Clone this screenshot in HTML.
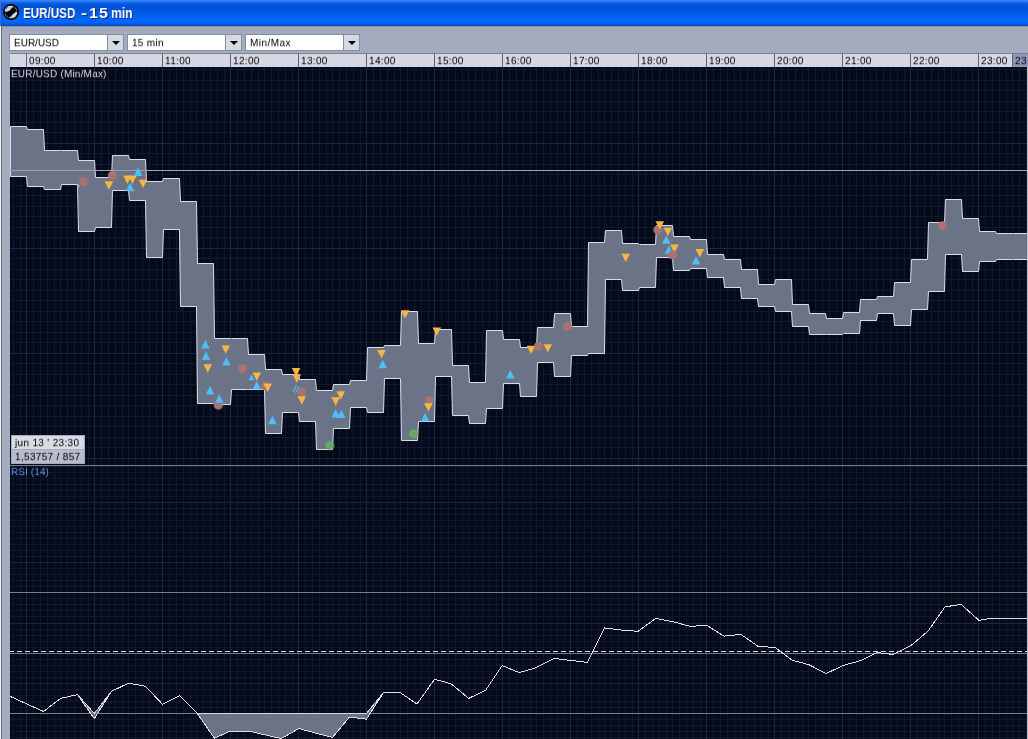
<!DOCTYPE html>
<html><head><meta charset="utf-8"><title>EUR/USD - 15 min</title>
<style>
html,body{margin:0;padding:0}
body{width:1028px;height:739px;overflow:hidden;position:relative;background:#A3ABBF;font-family:"Liberation Sans",sans-serif}
#title{position:absolute;left:0;top:0;width:1028px;height:26px;background:linear-gradient(#3D8EF8 0,#2C7EF4 1px,#1468EA 2.5px,#0456DE 4.5px,#0052D8 8px,#005AE6 13px,#0066FA 19px,#0066F8 22.5px,#0054DC 24.5px,#0044C4 26px)}
#title .lb{position:absolute;left:0;top:0;width:1px;height:26px;background:#5B5FC8}
#title .tx{position:absolute;left:23px;top:4px;font-weight:bold;font-size:14px;line-height:18px;color:#fff;text-shadow:1px 1px 0 #0A2A8C;white-space:nowrap;width:120px;height:18px}
#title .tx span{position:absolute;top:0;display:block;transform-origin:0 0;will-change:transform}
#ico{position:absolute;left:3px;top:4px}
#tline{position:absolute;left:1px;top:26px;width:1027px;height:1px;background:#8C8F98}
#lw{position:absolute;left:0;top:26px;width:1px;height:713px;background:#F4F4F6}
#ld{position:absolute;left:1px;top:26px;width:1px;height:713px;background:#6A6E78}
.cb{position:absolute;top:34px;height:15px;width:113px;border:1px solid #858DA0;background:#fff}
.cb span{transform:scaleY(0.93);transform-origin:0 100%;will-change:transform;position:absolute;left:3.6px;top:1px;font-size:10px;line-height:13px;letter-spacing:0.3px;color:#000;white-space:nowrap}
.cb i{position:absolute;right:0;top:0;width:15px;height:15px;background:#D5D9E3;border-left:1px solid #858DA0}
.cb i:after{content:"";position:absolute;left:4px;top:6px;border-left:4px solid transparent;border-right:4px solid transparent;border-top:4px solid #000}
#axis{position:absolute;left:10px;top:53px;width:1018px;height:14px;background:#D5D8E2;border-top:1px solid #7B8296;box-sizing:border-box}
.tk{position:absolute;top:53px;width:1px;height:14px;background:#5E6678}
.tl{will-change:transform;position:absolute;top:54.6px;font-size:10px;line-height:12px;letter-spacing:0.33px;transform:scaleY(0.93);transform-origin:0 100%;color:#000}
.cur span{display:inline-block;will-change:transform;transform:scaleY(0.93);transform-origin:0 100%;}
.cur{position:absolute;left:1012px;top:54px;width:16px;height:13px;background:#8D96BA;font-size:10px;line-height:13px;letter-spacing:0.33px;color:#000;padding-left:2px;box-sizing:border-box;overflow:hidden;border-left:1px solid #5E6678}
.lbl{transform:scaleY(0.93);transform-origin:0 100%;position:absolute;left:10.5px;font-size:10px;line-height:12px;letter-spacing:0.2px;white-space:nowrap;will-change:transform}
.tip span{display:inline-block;will-change:transform;transform:scaleY(0.93);transform-origin:0 100%;}
.tip{position:absolute;left:11px;width:72px;height:13px;border:1px solid #A4AABC;font-size:10px;line-height:13px;letter-spacing:0.33px;color:#000;white-space:nowrap}
</style></head><body>
<div id="title"><div class="lb"></div>
<svg id="ico" width="16" height="16" viewBox="0 0 16 16"><circle cx="8" cy="8" r="8" fill="#000"/><g transform="translate(8 8) scale(0.93) translate(-8 -8)"><path d="M1.3 7.7C1.1 4.2 3.6 1.3 7.4 1.2C9 1.2 10.3 1.6 11.3 2.3C9.6 2.7 8.9 3.7 8.1 4.9C7.1 6.4 5.6 7.5 3.6 7.7Z" fill="#CACED8"/><path d="M2.2 5.6C2.8 3.6 4.6 2.2 6.8 1.9C5.2 2.8 3.8 4.2 3.2 6.2Z" fill="#E6E8EE"/><path d="M11.6 2.9A6.6 6.6 0 0 1 14.6 7.2" stroke="#596171" stroke-width="1.5" fill="none"/><path d="M14.8 7.6C15 11.6 12 14.7 8.2 14.8C7.1 14.8 6.1 14.6 5.4 14.1C7.3 13.6 8.5 12.4 9.6 10.8C10.8 9.2 12.5 7.8 14.8 7.6Z" fill="#CACED8"/><path d="M13.6 9.6C13 11.6 11.4 13.2 9.4 13.8C10.8 12.8 12 11.4 12.6 9.8Z" fill="#E4E6EC"/><path d="M1.5 9.6A6.6 6.6 0 0 0 4.8 13.8" stroke="#474F5F" stroke-width="1.5" fill="none"/></g><rect x="3" y="4" width="1" height="1" fill="#1C5CE0"/><rect x="4" y="3" width="1" height="1" fill="#1C5CE0"/></svg>
<div class="tx"><span style="left:0;transform:scaleX(0.83)">EUR/USD</span> <span style="left:58px;transform:scaleX(1.3)">-</span> <span style="left:66.2px;transform:scaleX(1.15);letter-spacing:0.9px">15</span> <span style="left:88.3px;transform:scaleX(0.87)">min</span></div></div>
<div id="tline"></div><div id="lw"></div><div id="ld"></div>
<div class="cb" style="left:9px"><span style="letter-spacing:0">EUR/USD</span><i></i></div>
<div class="cb" style="left:127px"><span>15 min</span><i></i></div>
<div class="cb" style="left:245px"><span style="letter-spacing:0.45px">Min/Max</span><i></i></div>
<div id="axis"></div>
<div class="tk" style="left:26px"></div><div class="tl" style="left:29px">09:00</div><div class="tk" style="left:94px"></div><div class="tl" style="left:97px">10:00</div><div class="tk" style="left:162px"></div><div class="tl" style="left:165px">11:00</div><div class="tk" style="left:230px"></div><div class="tl" style="left:233px">12:00</div><div class="tk" style="left:298px"></div><div class="tl" style="left:301px">13:00</div><div class="tk" style="left:366px"></div><div class="tl" style="left:369px">14:00</div><div class="tk" style="left:434px"></div><div class="tl" style="left:437px">15:00</div><div class="tk" style="left:502px"></div><div class="tl" style="left:505px">16:00</div><div class="tk" style="left:570px"></div><div class="tl" style="left:573px">17:00</div><div class="tk" style="left:638px"></div><div class="tl" style="left:641px">18:00</div><div class="tk" style="left:706px"></div><div class="tl" style="left:709px">19:00</div><div class="tk" style="left:774px"></div><div class="tl" style="left:777px">20:00</div><div class="tk" style="left:842px"></div><div class="tl" style="left:845px">21:00</div><div class="tk" style="left:910px"></div><div class="tl" style="left:913px">22:00</div><div class="tk" style="left:978px"></div><div class="tl" style="left:981px">23:00</div><div class="cur"><span>23</span></div>
<svg style="position:absolute;left:10px;top:67px" width="1018" height="672" viewBox="10 67 1018 672"><rect x="10" y="67" width="1018" height="672" fill="#030A1C"/><g shape-rendering="crispEdges" stroke-width="1"><path d="M13.5 67V739M20.5 67V739M33.5 67V739M40.5 67V739M47.5 67V739M54.5 67V739M60.5 67V739M67.5 67V739M74.5 67V739M81.5 67V739M88.5 67V739M101.5 67V739M108.5 67V739M115.5 67V739M122.5 67V739M128.5 67V739M135.5 67V739M142.5 67V739M149.5 67V739M156.5 67V739M169.5 67V739M176.5 67V739M183.5 67V739M190.5 67V739M196.5 67V739M203.5 67V739M210.5 67V739M217.5 67V739M224.5 67V739M237.5 67V739M244.5 67V739M251.5 67V739M258.5 67V739M264.5 67V739M271.5 67V739M278.5 67V739M285.5 67V739M292.5 67V739M305.5 67V739M312.5 67V739M319.5 67V739M326.5 67V739M332.5 67V739M339.5 67V739M346.5 67V739M353.5 67V739M360.5 67V739M373.5 67V739M380.5 67V739M387.5 67V739M394.5 67V739M400.5 67V739M407.5 67V739M414.5 67V739M421.5 67V739M428.5 67V739M441.5 67V739M448.5 67V739M455.5 67V739M462.5 67V739M468.5 67V739M475.5 67V739M482.5 67V739M489.5 67V739M496.5 67V739M509.5 67V739M516.5 67V739M523.5 67V739M530.5 67V739M536.5 67V739M543.5 67V739M550.5 67V739M557.5 67V739M564.5 67V739M577.5 67V739M584.5 67V739M591.5 67V739M598.5 67V739M604.5 67V739M611.5 67V739M618.5 67V739M625.5 67V739M632.5 67V739M645.5 67V739M652.5 67V739M659.5 67V739M666.5 67V739M672.5 67V739M679.5 67V739M686.5 67V739M693.5 67V739M700.5 67V739M713.5 67V739M720.5 67V739M727.5 67V739M734.5 67V739M740.5 67V739M747.5 67V739M754.5 67V739M761.5 67V739M768.5 67V739M781.5 67V739M788.5 67V739M795.5 67V739M802.5 67V739M808.5 67V739M815.5 67V739M822.5 67V739M829.5 67V739M836.5 67V739M849.5 67V739M856.5 67V739M863.5 67V739M870.5 67V739M876.5 67V739M883.5 67V739M890.5 67V739M897.5 67V739M904.5 67V739M917.5 67V739M924.5 67V739M931.5 67V739M938.5 67V739M944.5 67V739M951.5 67V739M958.5 67V739M965.5 67V739M972.5 67V739M985.5 67V739M992.5 67V739M999.5 67V739M1006.5 67V739M1012.5 67V739M1019.5 67V739M1026.5 67V739" stroke="#111929" fill="none"/><path d="M10 69.5H1028M10 80.5H1028M10 90.5H1028M10 101.5H1028M10 111.5H1028M10 122.5H1028M10 132.5H1028M10 153.5H1028M10 164.5H1028M10 174.5H1028M10 185.5H1028M10 195.5H1028M10 206.5H1028M10 216.5H1028M10 227.5H1028M10 237.5H1028M10 258.5H1028M10 269.5H1028M10 279.5H1028M10 290.5H1028M10 300.5H1028M10 311.5H1028M10 321.5H1028M10 332.5H1028M10 342.5H1028M10 363.5H1028M10 374.5H1028M10 384.5H1028M10 395.5H1028M10 405.5H1028M10 416.5H1028M10 426.5H1028M10 437.5H1028M10 447.5H1028M10 466.5H1028M10 472.5H1028M10 478.5H1028M10 484.5H1028M10 490.5H1028M10 496.5H1028M10 508.5H1028M10 514.5H1028M10 520.5H1028M10 526.5H1028M10 532.5H1028M10 538.5H1028M10 544.5H1028M10 550.5H1028M10 556.5H1028M10 568.5H1028M10 574.5H1028M10 580.5H1028M10 586.5H1028M10 592.5H1028M10 598.5H1028M10 604.5H1028M10 610.5H1028M10 616.5H1028M10 629.5H1028M10 635.5H1028M10 641.5H1028M10 647.5H1028M10 653.5H1028M10 659.5H1028M10 665.5H1028M10 671.5H1028M10 677.5H1028M10 689.5H1028M10 695.5H1028M10 701.5H1028M10 707.5H1028M10 713.5H1028M10 719.5H1028M10 725.5H1028M10 731.5H1028M10 737.5H1028" stroke="#111929" fill="none"/><path d="M26.5 67V739M94.5 67V739M162.5 67V739M230.5 67V739M298.5 67V739M366.5 67V739M434.5 67V739M502.5 67V739M570.5 67V739M638.5 67V739M706.5 67V739M774.5 67V739M842.5 67V739M910.5 67V739M978.5 67V739M10 143.5H1028M10 248.5H1028M10 353.5H1028M10 458.5H1028M10 502.5H1028M10 562.5H1028M10 623.5H1028M10 683.5H1028" stroke="#1E2638" fill="none"/></g><path d="M10.5 126.5 L26.5 126.5 L27.5 129.5 L43.5 129.5 L44.5 150.5 L60.5 150.5 L61.5 150.5 L77.5 150.5 L78.5 160.5 L94.5 160.5 L95.5 177.5 L111.5 177.5 L112.5 155.5 L128.5 155.5 L129.5 159.5 L145.5 159.5 L146.5 181.5 L162.5 181.5 L163.5 178.5 L179.5 178.5 L180.5 201.5 L196.5 201.5 L197.5 263.5 L213.5 263.5 L214.5 338.5 L230.5 338.5 L231.5 338.5 L247.5 338.5 L248.5 354.5 L264.5 354.5 L265.5 369.5 L281.5 369.5 L282.5 374.5 L298.5 374.5 L299.5 379.5 L315.5 379.5 L316.5 390.5 L332.5 390.5 L333.5 384.5 L349.5 384.5 L350.5 380.5 L366.5 380.5 L367.5 347.5 L383.5 347.5 L384.5 345.5 L400.5 345.5 L401.5 311.5 L417.5 311.5 L418.5 343.5 L434.5 343.5 L435.5 329.5 L451.5 329.5 L452.5 365.5 L468.5 365.5 L469.5 382.5 L485.5 382.5 L486.5 330.5 L502.5 330.5 L503.5 339.5 L519.5 339.5 L520.5 347.5 L536.5 347.5 L537.5 327.5 L553.5 327.5 L554.5 313.5 L570.5 313.5 L571.5 326.5 L587.5 326.5 L588.5 242.5 L604.5 242.5 L605.5 230.5 L621.5 230.5 L622.5 243.5 L638.5 243.5 L639.5 244.5 L655.5 244.5 L656.5 225.5 L672.5 225.5 L673.5 236.5 L689.5 236.5 L690.5 239.5 L706.5 239.5 L707.5 254.5 L723.5 254.5 L724.5 259.5 L740.5 259.5 L741.5 269.5 L757.5 269.5 L758.5 284.5 L774.5 284.5 L775.5 279.5 L791.5 279.5 L792.5 304.5 L808.5 304.5 L809.5 313.5 L825.5 313.5 L826.5 318.5 L842.5 318.5 L843.5 312.5 L859.5 312.5 L860.5 299.5 L876.5 299.5 L877.5 296.5 L893.5 296.5 L894.5 282.5 L910.5 282.5 L911.5 259.5 L927.5 259.5 L928.5 222.5 L944.5 222.5 L945.5 199.5 L961.5 199.5 L962.5 218.5 L978.5 218.5 L979.5 231.5 L995.5 231.5 L996.5 233.5 L1012.5 233.5 L1013.5 233.5 L1027.5 233.5 L1027.5 259.5 L1013.5 259.5 L1012.5 259.5 L996.5 259.5 L995.5 261.5 L979.5 261.5 L978.5 271.5 L962.5 271.5 L961.5 254.5 L945.5 254.5 L944.5 291.5 L928.5 291.5 L927.5 309.5 L911.5 309.5 L910.5 325.5 L894.5 325.5 L893.5 313.5 L877.5 313.5 L876.5 320.5 L860.5 320.5 L859.5 333.5 L843.5 333.5 L842.5 334.5 L826.5 334.5 L825.5 334.5 L809.5 334.5 L808.5 326.5 L792.5 326.5 L791.5 311.5 L775.5 311.5 L774.5 306.5 L758.5 306.5 L757.5 298.5 L741.5 298.5 L740.5 287.5 L724.5 287.5 L723.5 277.5 L707.5 277.5 L706.5 268.5 L690.5 268.5 L689.5 270.5 L673.5 270.5 L672.5 257.5 L656.5 257.5 L655.5 287.5 L639.5 287.5 L638.5 290.5 L622.5 290.5 L621.5 279.5 L605.5 279.5 L604.5 353.5 L588.5 353.5 L587.5 355.5 L571.5 355.5 L570.5 376.5 L554.5 376.5 L553.5 362.5 L537.5 362.5 L536.5 396.5 L520.5 396.5 L519.5 383.5 L503.5 383.5 L502.5 408.5 L486.5 408.5 L485.5 423.5 L469.5 423.5 L468.5 415.5 L452.5 415.5 L451.5 376.5 L435.5 376.5 L434.5 421.5 L418.5 421.5 L417.5 440.5 L401.5 440.5 L400.5 378.5 L384.5 378.5 L383.5 412.5 L367.5 412.5 L366.5 407.5 L350.5 407.5 L349.5 428.5 L333.5 428.5 L332.5 449.5 L316.5 449.5 L315.5 421.5 L299.5 421.5 L298.5 412.5 L282.5 412.5 L281.5 433.5 L265.5 433.5 L264.5 389.5 L248.5 389.5 L247.5 389.5 L231.5 389.5 L230.5 404.5 L214.5 404.5 L213.5 403.5 L197.5 403.5 L196.5 306.5 L180.5 306.5 L179.5 229.5 L163.5 229.5 L162.5 257.5 L146.5 257.5 L145.5 200.5 L129.5 200.5 L128.5 190.5 L112.5 190.5 L111.5 227.5 L95.5 227.5 L94.5 231.5 L78.5 231.5 L77.5 184.5 L61.5 184.5 L60.5 189.5 L44.5 189.5 L43.5 186.5 L27.5 186.5 L26.5 176.5 L10.5 176.5Z" fill="#6B7387" stroke="#DADEE8" stroke-width="1" stroke-linejoin="miter"/><rect x="10" y="170" width="1018" height="1" fill="#98A1BA" shape-rendering="crispEdges"/><circle cx="83.7" cy="181.9" r="4.9" fill="#A87472" opacity="0.5"/><circle cx="83.4" cy="181.6" r="4.1" fill="#A87472"/><path d="M76.9 187.1L80.3 187.1L78.6 183.7Z" fill="#4FBDF8"/><circle cx="112.6" cy="175.8" r="4.9" fill="#A87472" opacity="0.5"/><circle cx="112.3" cy="175.5" r="4.1" fill="#A87472"/><path d="M104.6 181.3L113.2 181.3L108.9 189.7Z" fill="#F8B444"/><path d="M123.1 175.5L131.7 175.5L127.4 183.9Z" fill="#F8B444"/><path d="M128.2 175.5L136.8 175.5L132.5 183.9Z" fill="#F8B444"/><path d="M133.8 176.0L142.4 176.0L138.1 167.6Z" fill="#4FBDF8"/><path d="M125.8 191.2L134.4 191.2L130.1 182.8Z" fill="#4FBDF8"/><path d="M138.7 179.7L147.3 179.7L143.0 188.1Z" fill="#F8B444"/><path d="M201.1 348.5L209.7 348.5L205.4 340.1Z" fill="#4FBDF8"/><path d="M201.7 359.7L210.3 359.7L206.0 351.3Z" fill="#4FBDF8"/><path d="M203.5 364.3L212.1 364.3L207.8 372.7Z" fill="#F8B444"/><path d="M205.7 394.4L214.3 394.4L210.0 386.0Z" fill="#4FBDF8"/><circle cx="218.5" cy="405.3" r="4.9" fill="#A87472" opacity="0.5"/><circle cx="218.2" cy="405" r="4.1" fill="#A87472"/><path d="M215.0 402.7L223.6 402.7L219.3 394.3Z" fill="#4FBDF8"/><path d="M221.4 345.4L230.0 345.4L225.7 353.8Z" fill="#F8B444"/><path d="M222.0 365.4L230.6 365.4L226.3 357.0Z" fill="#4FBDF8"/><circle cx="242.60000000000002" cy="368.8" r="4.9" fill="#A87472" opacity="0.5"/><circle cx="242.3" cy="368.5" r="4.1" fill="#A87472"/><path d="M248.5 380.3L254.5 380.3L251.5 374.5Z" fill="#4FBDF8"/><path d="M252.5 372.6L261.1 372.6L256.8 381.0Z" fill="#F8B444"/><path d="M252.5 389.5L261.1 389.5L256.8 381.1Z" fill="#4FBDF8"/><circle cx="265.6" cy="386.2" r="4.9" fill="#A87472" opacity="0.5"/><circle cx="265.3" cy="385.9" r="4.1" fill="#A87472"/><path d="M263.4 383.6L272.0 383.6L267.7 392.0Z" fill="#F8B444"/><path d="M268.1 424.2L276.7 424.2L272.4 415.8Z" fill="#4FBDF8"/><path d="M291.8 368.0L300.4 368.0L296.1 376.4Z" fill="#F8B444"/><path d="M292.5 374.3L301.1 374.3L296.8 382.7Z" fill="#F8B444"/><circle cx="301.7" cy="392.3" r="4.9" fill="#A87472" opacity="0.5"/><circle cx="301.4" cy="392" r="4.1" fill="#A87472"/><path d="M297.5 396.3L306.1 396.3L301.8 404.7Z" fill="#F8B444"/><path d="M336.5 391.3L345.1 391.3L340.8 399.7Z" fill="#F8B444"/><path d="M331.4 397.3L340.0 397.3L335.7 405.7Z" fill="#F8B444"/><path d="M331.4 417.4L340.0 417.4L335.7 409.0Z" fill="#4FBDF8"/><path d="M337.1 418.1L345.7 418.1L341.4 409.7Z" fill="#4FBDF8"/><circle cx="329.90000000000003" cy="445.6" r="4.9" fill="#68A568" opacity="0.5"/><circle cx="329.6" cy="445.3" r="4.1" fill="#68A568"/><path d="M377.2 350.1L385.8 350.1L381.5 358.5Z" fill="#F8B444"/><path d="M378.5 368.2L387.1 368.2L382.8 359.8Z" fill="#4FBDF8"/><path d="M400.8 310.2L409.4 310.2L405.1 318.6Z" fill="#F8B444"/><path d="M432.5 327.4L441.1 327.4L436.8 335.8Z" fill="#F8B444"/><circle cx="429.40000000000003" cy="400.6" r="4.9" fill="#A87472" opacity="0.5"/><circle cx="429.1" cy="400.3" r="4.1" fill="#A87472"/><path d="M424.1 403.2L432.7 403.2L428.4 411.6Z" fill="#F8B444"/><path d="M420.8 421.4L429.4 421.4L425.1 413.0Z" fill="#4FBDF8"/><circle cx="413.7" cy="434.0" r="4.9" fill="#68A568" opacity="0.5"/><circle cx="413.4" cy="433.7" r="4.1" fill="#68A568"/><path d="M506.0 378.5L514.6 378.5L510.3 370.1Z" fill="#4FBDF8"/><path d="M526.7 345.7L535.3 345.7L531.0 354.1Z" fill="#F8B444"/><circle cx="538.5999999999999" cy="346.7" r="4.9" fill="#A87472" opacity="0.5"/><circle cx="538.3" cy="346.4" r="4.1" fill="#A87472"/><path d="M543.5 344.2L552.1 344.2L547.8 352.6Z" fill="#F8B444"/><circle cx="567.6999999999999" cy="326.8" r="4.9" fill="#A87472" opacity="0.5"/><circle cx="567.4" cy="326.5" r="4.1" fill="#A87472"/><path d="M621.4 253.7L630.0 253.7L625.7 262.1Z" fill="#F8B444"/><circle cx="658.0999999999999" cy="230.10000000000002" r="4.9" fill="#A87472" opacity="0.5"/><circle cx="657.8" cy="229.8" r="4.1" fill="#A87472"/><path d="M655.5 221.2L664.1 221.2L659.8 229.6Z" fill="#F8B444"/><path d="M663.6 227.7L672.2 227.7L667.9 236.1Z" fill="#F8B444"/><path d="M662.0 243.8L670.6 243.8L666.3 235.4Z" fill="#4FBDF8"/><path d="M664.7 253.9L673.3 253.9L669.0 245.5Z" fill="#4FBDF8"/><path d="M670.1 244.5L678.7 244.5L674.4 252.9Z" fill="#F8B444"/><circle cx="672.6999999999999" cy="255.10000000000002" r="4.9" fill="#A87472" opacity="0.5"/><circle cx="672.4" cy="254.8" r="4.1" fill="#A87472"/><path d="M695.5 249.0L704.1 249.0L699.8 257.4Z" fill="#F8B444"/><path d="M691.7 264.5L700.3 264.5L696.0 256.1Z" fill="#4FBDF8"/><circle cx="942.5999999999999" cy="225.8" r="4.9" fill="#A87472" opacity="0.5"/><circle cx="942.3" cy="225.5" r="4.1" fill="#A87472"/><path d="M293 392L296.5 385.5M295.5 393L299 386.5" stroke="#4FBDF8" stroke-width="1.1" fill="none"/><rect x="10" y="465" width="1018" height="1" fill="#737B94" shape-rendering="crispEdges"/><g shape-rendering="crispEdges"><rect x="10" y="592" width="1018" height="1" fill="#7E7E82"/><rect x="10" y="653" width="1018" height="1" fill="#7E7E82"/><rect x="10" y="713" width="1018" height="1" fill="#7E7E82"/></g><path d="M10.0 696.3 L43.5 711.5 L60.5 698.4 L77.5 694.6 L94.3 718.6 L111.5 691.3 L128.5 683.2 L145.5 686.2 L162.6 704.4 L179.6 695.6 L197.2 713.3 L214.3 738.1 L230.6 731.0 L248.3 731.0 L264.7 734.8 L281.2 738.6 L298.9 728.5 L315.3 733.0 L332.5 737.4 L349.4 717.1 L366.4 719.2 L383.6 692.4 L400.0 692.4 L417.0 704.0 L434.5 679.3 L450.9 683.7 L468.8 698.4 L485.8 690.0 L502.2 665.5 L519.1 672.6 L535.8 667.8 L554.0 658.4 L570.5 660.4 L587.4 662.4 L604.6 628.0 L621.0 630.0 L638.0 631.3 L655.7 618.4 L673.0 621.7 L690.0 626.3 L707.0 625.5 L724.0 636.1 L741.0 634.4 L758.0 646.3 L775.0 647.5 L792.0 660.2 L809.0 664.7 L826.0 673.6 L843.0 665.5 L860.0 660.8 L877.0 652.6 L893.0 654.4 L911.0 645.5 L928.0 631.2 L945.0 606.9 L961.0 604.3 L979.0 620.4 L991.6 618.3 L1027.0 618.3 L1027.0 618.3 L991.6 618.3 L979.0 620.4 L961.0 604.3 L945.0 606.9 L928.0 631.2 L911.0 645.5 L893.0 654.4 L877.0 652.6 L860.0 660.8 L843.0 665.5 L826.0 673.6 L809.0 664.7 L792.0 660.2 L775.0 647.5 L758.0 646.3 L741.0 634.4 L724.0 636.1 L707.0 625.5 L690.0 626.3 L673.0 621.7 L655.7 618.4 L638.0 631.3 L621.0 630.0 L604.6 628.0 L587.4 662.4 L570.5 660.4 L554.0 658.4 L535.8 667.8 L519.1 672.6 L502.2 665.5 L485.8 690.0 L468.8 698.4 L450.9 683.7 L434.5 679.3 L417.0 704.0 L400.0 692.4 L383.6 692.4 L366.4 713.5 L349.4 713.5 L332.5 713.5 L315.3 713.5 L298.9 713.5 L281.2 713.5 L264.7 713.5 L248.3 713.5 L230.6 713.5 L214.3 713.5 L197.2 713.3 L179.6 695.6 L162.6 704.4 L145.5 686.2 L128.5 683.2 L111.5 691.3 L94.3 713.5 L77.5 694.6 L60.5 698.4 L43.5 711.5 L10.0 696.3Z" fill="#6B7387" stroke="none"/><path d="M10.0 696.3 L43.5 711.5 L60.5 698.4 L77.5 694.6 L94.3 713.5 L111.5 691.3 L128.5 683.2 L145.5 686.2 L162.6 704.4 L179.6 695.6 L197.2 713.3 L214.3 713.5 L230.6 713.5 L248.3 713.5 L264.7 713.5 L281.2 713.5 L298.9 713.5 L315.3 713.5 L332.5 713.5 L349.4 713.5 L366.4 713.5 L383.6 692.4 L400.0 692.4 L417.0 704.0 L434.5 679.3 L450.9 683.7 L468.8 698.4 L485.8 690.0 L502.2 665.5 L519.1 672.6 L535.8 667.8 L554.0 658.4 L570.5 660.4 L587.4 662.4 L604.6 628.0 L621.0 630.0 L638.0 631.3 L655.7 618.4 L673.0 621.7 L690.0 626.3 L707.0 625.5 L724.0 636.1 L741.0 634.4 L758.0 646.3 L775.0 647.5 L792.0 660.2 L809.0 664.7 L826.0 673.6 L843.0 665.5 L860.0 660.8 L877.0 652.6 L893.0 654.4 L911.0 645.5 L928.0 631.2 L945.0 606.9 L961.0 604.3 L979.0 620.4 L991.6 618.3 L1027.0 618.3" fill="none" stroke="#D4D8E0" stroke-width="1" shape-rendering="crispEdges"/><path d="M10.0 696.3 L43.5 711.5 L60.5 698.4 L77.5 694.6 L94.3 718.6 L111.5 691.3 L128.5 683.2 L145.5 686.2 L162.6 704.4 L179.6 695.6 L197.2 713.3 L214.3 738.1 L230.6 731.0 L248.3 731.0 L264.7 734.8 L281.2 738.6 L298.9 728.5 L315.3 733.0 L332.5 737.4 L349.4 717.1 L366.4 719.2 L383.6 692.4 L400.0 692.4 L417.0 704.0 L434.5 679.3 L450.9 683.7 L468.8 698.4 L485.8 690.0 L502.2 665.5 L519.1 672.6 L535.8 667.8 L554.0 658.4 L570.5 660.4 L587.4 662.4 L604.6 628.0 L621.0 630.0 L638.0 631.3 L655.7 618.4 L673.0 621.7 L690.0 626.3 L707.0 625.5 L724.0 636.1 L741.0 634.4 L758.0 646.3 L775.0 647.5 L792.0 660.2 L809.0 664.7 L826.0 673.6 L843.0 665.5 L860.0 660.8 L877.0 652.6 L893.0 654.4 L911.0 645.5 L928.0 631.2 L945.0 606.9 L961.0 604.3 L979.0 620.4 L991.6 618.3 L1027.0 618.3" fill="none" stroke="#DDE0E8" stroke-width="1" shape-rendering="crispEdges"/><path d="M9 651.5H1028" stroke="#CFDDF4" stroke-width="1.4" stroke-dasharray="5 3" fill="none" shape-rendering="crispEdges"/><rect x="1027" y="67" width="1" height="672" fill="#B8C0D0" shape-rendering="crispEdges"/></svg>
<div class="lbl" style="top:67.5px;color:#D6DAE6">EUR/USD (Min/Max)</div>
<div class="lbl" style="top:465.7px;color:#5E8FE4;letter-spacing:0.1px">RSI (14)</div>
<div class="tip" style="top:435px;background:#D9DBE5"><span style="margin-left:2.6px">jun 13 ' 23:30</span></div>
<div class="tip" style="top:449px;background:#B7BBCB;height:13px"><span style="margin-left:3px">1,53757 / 857</span></div>
</body></html>
